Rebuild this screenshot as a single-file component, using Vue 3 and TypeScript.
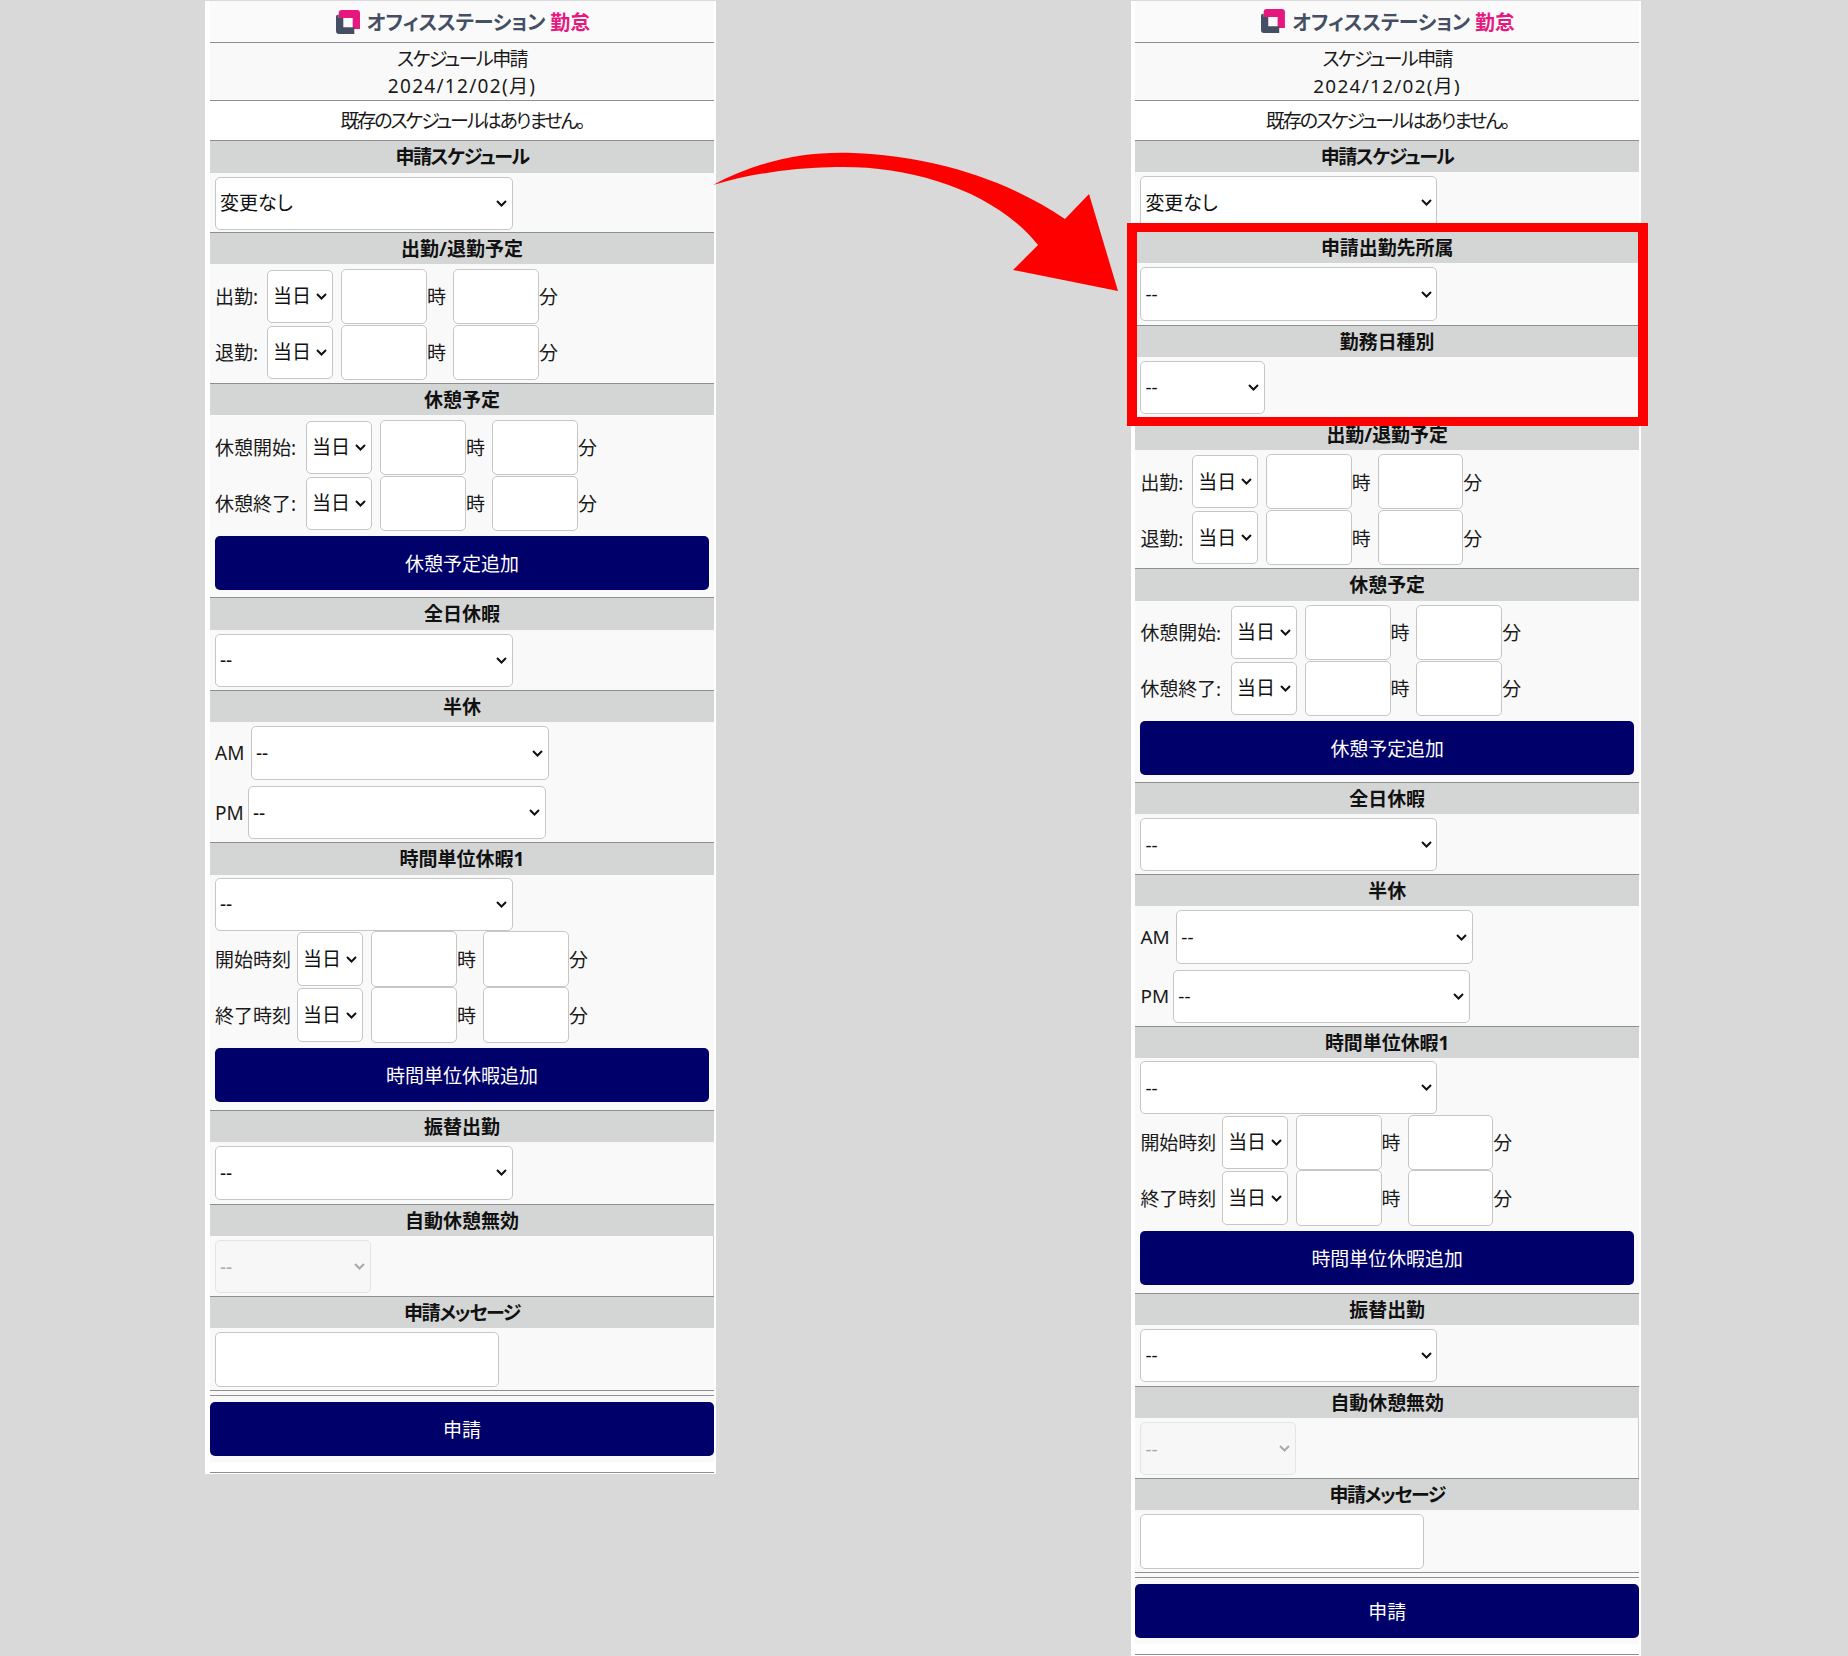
<script setup lang="ts">
type Row = { label: string; size: 'sm' | 'md' | 'lg' }
type Block =
  | { kind: 'select'; value?: string; size?: 'short' | 'tiny'; disabled?: boolean }
  | { kind: 'half' }
  | { kind: 'times'; rows: Row[] }
  | { kind: 'button'; text: string }
  | { kind: 'message' }
type Section = { title: string; blocks: Block[]; tall?: boolean; edge?: boolean; gap?: boolean; tight?: boolean; kana?: boolean; lead?: boolean; lift?: boolean }

const attendance: Section[] = [
  { title: '申請出勤先所属', tall: true, blocks: [{ kind: 'select' }] },
  { title: '勤務日種別', tall: true, blocks: [{ kind: 'select', size: 'tiny' }] },
]

const common: Section[] = [
  { title: '出勤/退勤予定', tight: true, blocks: [{ kind: 'times', rows: [{ label: '出勤:', size: 'sm' }, { label: '退勤:', size: 'sm' }] }] },
  { title: '休憩予定', gap: true, blocks: [
    { kind: 'times', rows: [{ label: '休憩開始:', size: 'lg' }, { label: '休憩終了:', size: 'lg' }] },
    { kind: 'button', text: '休憩予定追加' },
  ] },
  { title: '全日休暇', blocks: [{ kind: 'select' }] },
  { title: '半休', blocks: [{ kind: 'half' }] },
  { title: '時間単位休暇1', gap: true, lift: true, blocks: [
    { kind: 'select' },
    { kind: 'times', rows: [{ label: '開始時刻', size: 'md' }, { label: '終了時刻', size: 'md' }] },
    { kind: 'button', text: '時間単位休暇追加' },
  ] },
  { title: '振替出勤', tall: true, blocks: [{ kind: 'select' }] },
  { title: '自動休憩無効', edge: true, blocks: [{ kind: 'select', size: 'short', disabled: true }] },
  { title: '申請メッセージ', kana: true, blocks: [{ kind: 'message' }] },
]

const first: Section = { title: '申請スケジュール', kana: true, lead: true, blocks: [{ kind: 'select', value: '変更なし' }] }

const panels = [
  { id: 'before', sections: [first, ...common] },
  { id: 'after', sections: [first, ...attendance, ...common] },
]
</script>

<template>
  <main class="page">
    <section v-for="panel in panels" :key="panel.id" class="panel" :class="panel.id">
      <header class="brand">
        <svg class="mark" viewBox="0 0 24 24" aria-hidden="true">
          <path d="M2.7 8V3a3 3 0 0 1 3-3H21a3 3 0 0 1 3 3v16H16.7V8z" fill="#e6177f" />
          <path d="M2 4.7h.7V8h4.6v9.3h11V24H3a3 3 0 0 1-3-3V6.7a2 2 0 0 1 2-2z" fill="#454f63" />
        </svg>
        <span class="brand-name">オフィスステーション</span>
        <span class="brand-kind">勤怠</span>
      </header>
      <div class="title"><span class="kana-title">スケジュール申請</span><br /><span class="date">2024/12/02(月)</span></div>
      <p class="notice">既存のスケジュールはありません。</p>

      <div v-for="s in panel.sections" :key="s.title" class="group">
        <h2 class="head" :class="{ kana: s.kana }">{{ s.title }}</h2>
        <div class="body" :class="{ tall: s.tall, edge: s.edge, 'with-gap': s.gap, tight: s.tight, lead: s.lead, lift: s.lift }">
          <template v-for="(b, i) in s.blocks" :key="i">
            <select v-if="b.kind === 'select'" class="sel" :class="b.size" :disabled="b.disabled">
              <option>{{ b.value ?? '--' }}</option>
            </select>

            <div v-else-if="b.kind === 'half'" class="half">
              <label class="half-row"><span class="am">AM</span><select class="sel"><option>--</option></select></label>
              <label class="half-row"><span class="pm">PM</span><select class="sel"><option>--</option></select></label>
            </div>

            <div v-else-if="b.kind === 'times'" class="times">
              <div v-for="r in b.rows" :key="r.label" class="time-row">
                <span class="lbl" :class="r.size">{{ r.label }}</span>
                <select class="sel day"><option>当日</option></select>
                <input class="num" type="text" />
                <span class="unit">時</span>
                <input class="num" type="text" />
                <span class="unit">分</span>
              </div>
            </div>

            <button v-else-if="b.kind === 'button'" class="btn" type="button">{{ b.text }}</button>

            <textarea v-else class="msg"></textarea>
          </template>
        </div>
      </div>

      <div class="foot">
        <div class="foot-inner">
          <button class="btn submit" type="button">申請</button>
        </div>
      </div>
      <div class="tail"></div>
    </section>

    <svg class="arrow" viewBox="0 0 1848 1656" aria-hidden="true">
      <path
        d="M713 185C757 161 805 151 853 153C925 156 1000 175 1065 219L1089 194L1118 291L1013 270L1038 245C994 190 910 165 835 167C790 168 750 174 713 185Z"
        fill="#ff0000"
      />
    </svg>
    <div class="callout"></div>
  </main>
</template>

<style>
html, body { margin: 0; background: #d9d9d9; }
</style>

<style scoped>
.page {
  position: relative;
  width: 1848px;
  height: 1656px;
  box-sizing: border-box;
  padding: 1px 0 0 205px;
  display: flex;
  align-items: flex-start;
  gap: 414.5px;
  background: #d9d9d9;
  overflow: hidden;
  font-family: "Noto Sans", "Noto Sans CJK JP", sans-serif;
  font-size: 19px;
  color: #1a1a1a;
  font-feature-settings: "palt";
}
.panel {
  flex: none;
  width: 511px;
  box-sizing: border-box;
  padding: 0 2px 1px 5px;
  background: #fff;
}
.after { zoom: 0.9967; width: 512px; }
.brand {
  height: 41px;
  border-bottom: 1px solid #8f8f8f;
  background: #fafafa;
  display: flex;
  align-items: center;
  justify-content: center;
  gap: 7px;
  padding-left: 2px;
  font-size: 20px;
  font-weight: 700;
}
.mark { width: 24px; height: 24px; }
.brand-name { color: #454f63; letter-spacing: -0.2px; margin-right: -2px; }
.brand-kind { color: #e6177f; }
.title {
  height: 58px;
  border-bottom: 1px solid #8f8f8f;
  background: #f9f9f9;
  text-align: center;
  line-height: 27px;
  padding-top: 3px;
  box-sizing: border-box;
}
.kana-title { letter-spacing: -1.6px; }
.date { letter-spacing: 1.3px; }
.notice {
  margin: 0;
  height: 39.4px;
  line-height: 41px;
  text-align: center;
  background: #fff;
  letter-spacing: -2.1px;
}
.group { background: #f9f9f9; }
.head {
  margin: 0;
  height: 32.2px;
  box-sizing: border-box;
  border-top: 1px solid #8f8f8f;
  background: #d4d6d5;
  font-size: 19px;
  font-weight: 700;
  line-height: 33px;
  text-align: center;
  color: #111;
}
.head.kana { letter-spacing: -1.4px; }
.group:first-of-type .head { border-top: 0; }
.body {
  display: flex;
  flex-direction: column;
  align-items: flex-start;
  padding: 4px 5px 3px;
  min-height: 60px;
  box-sizing: border-box;
}
.body.lead { min-height: 59.4px; padding-bottom: 2px; }
.body.tall { min-height: 61.4px; }
.body.tight { min-height: 119px; }
.body.with-gap { padding-bottom: 7px; }
.body.lift { padding-top: 3px; padding-bottom: 8px; }
.body.edge { border-right: 1px solid #ccc; }
.sel {
  appearance: none;
  width: 298px;
  height: 53.5px;
  box-sizing: border-box;
  border: 1.5px solid #c6c6c6;
  border-radius: 5px;
  background-color: #fff;
  background-image: url("data:image/svg+xml,%3Csvg xmlns='http://www.w3.org/2000/svg' viewBox='0 0 11 7'%3E%3Cpath d='M1 1l4.5 4.5L10 1' fill='none' stroke='%23111' stroke-width='2'/%3E%3C/svg%3E");
  background-repeat: no-repeat;
  background-position: right 5px center;
  background-size: 11px 7px;
  padding: 0 18px 0 4px;
  font: inherit;
  font-feature-settings: "palt";
  color: #111;
}
.sel.tiny { width: 125px; }
.sel.short { width: 156px; }
.sel:disabled {
  background-color: #f7f7f7;
  background-image: url("data:image/svg+xml,%3Csvg xmlns='http://www.w3.org/2000/svg' viewBox='0 0 11 7'%3E%3Cpath d='M1 1l4.5 4.5L10 1' fill='none' stroke='%23aaa' stroke-width='2'/%3E%3C/svg%3E");
  border-color: #e4e4e4;
  color: #aaa;
  opacity: 1;
}
.half { display: flex; flex-direction: column; gap: 6px; }
.half-row { display: flex; align-items: center; }
.am { width: 36px; }
.pm { width: 33px; }
.times { display: flex; flex-direction: column; }
.time-row { display: flex; align-items: center; height: 56px; }
.lbl { white-space: nowrap; flex: none; }
.lbl.sm { width: 52px; }
.lbl.md { width: 82px; }
.lbl.lg { width: 91px; }
.day { width: 66px; height: 53.5px; margin-right: 8px; padding-left: 5px; padding-right: 0; }
.num {
  width: 86px;
  height: 55.5px;
  box-sizing: border-box;
  border: 1.5px solid #c6c6c6;
  border-radius: 5px;
  background: #fff;
  padding: 0;
}
.unit { width: 26px; box-sizing: border-box; }
.btn {
  display: block;
  width: 100%;
  height: 54px;
  margin-top: 5px;
  border: 0;
  border-radius: 5px;
  background: #00006a;
  color: #fff;
  font: inherit;
  font-feature-settings: "palt";
  padding: 0;
}
.msg {
  display: block;
  width: 284px;
  height: 55px;
  box-sizing: border-box;
  border: 1.5px solid #c6c6c6;
  border-radius: 5px;
  background: #fff;
  resize: none;
  margin: 0;
}
.foot {
  background: #f9f9f9;
  border-top: 1px solid #8f8f8f;
  padding-top: 4px;
}
.foot-inner {
  border-top: 1px solid #8f8f8f;
  padding-bottom: 6px;
}
.submit { margin-top: 6px; }
.tail {
  height: 10px;
  border-bottom: 1px solid #8f8f8f;
}
.arrow {
  position: absolute;
  left: 0;
  top: 0;
  width: 1848px;
  height: 1656px;
  pointer-events: none;
}
.callout {
  position: absolute;
  left: 1127px;
  top: 223px;
  width: 521px;
  height: 203px;
  box-sizing: border-box;
  border: solid #ff0000;
  border-width: 9px 10px;
  pointer-events: none;
}
</style>
